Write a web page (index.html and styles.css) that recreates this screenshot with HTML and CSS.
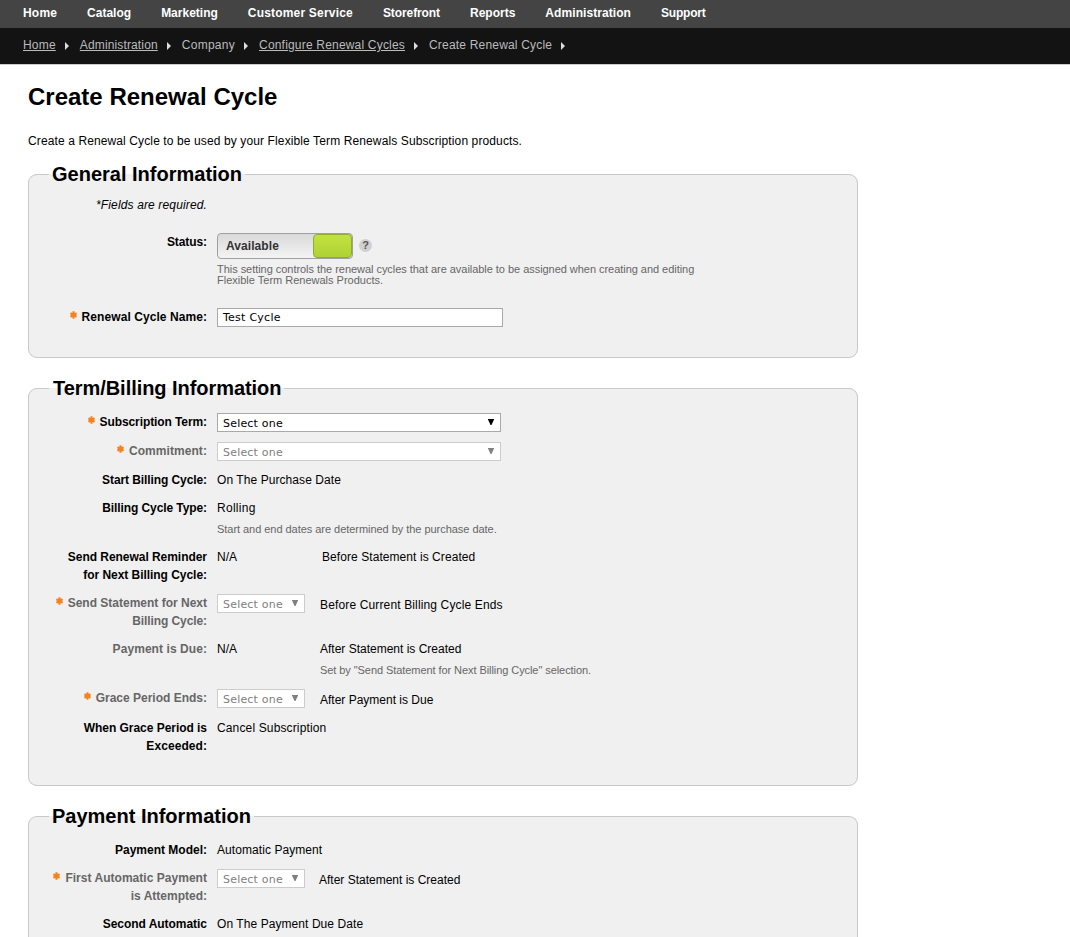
FILE: index.html
```
<!DOCTYPE html>
<html lang="en">
<head>
<meta charset="utf-8">
<title>Create Renewal Cycle</title>
<link rel="stylesheet" href="styles.css">
</head>
<body>
<svg width="0" height="0" class="defs"><defs>
<symbol id="req" viewBox="0 0 7 8"><path d="M3.5 0.3V7.7M0.4 2.2L6.6 5.8M6.6 2.2L0.4 5.8" stroke="#f58220" stroke-width="2.1" fill="none"/><circle cx="3.5" cy="4" r="2.3" fill="#f58220"/></symbol>
</defs></svg>
<nav class="nav">
<a class="w3">Home</a><a>Catalog</a><a>Marketing</a><a class="w3">Customer Service</a><a class="n1">Storefront</a><a>Reports</a><a class="w1">Administration</a><a class="n3">Support</a>
</nav>
<div class="crumbs">
<a class="link w3">Home</a><i></i><a class="link w2">Administration</a><i></i><a class="w4">Company</a><i></i><a class="link w3">Configure Renewal Cycles</a><i></i><a class="w3">Create Renewal Cycle</a><i></i>
</div>
<main class="page">
<h1>Create Renewal Cycle</h1>
<p class="intro">Create a Renewal Cycle to be used by your Flexible Term Renewals Subscription products.</p>

<fieldset class="panel general">
<legend>General Information</legend>
<div class="row required-note"><div class="label note w2">*Fields are required.</div></div>
<div class="row status"><div class="label"><b class="n1">Status:</b></div>
<div class="value"><div class="switch-line"><div class="switch"><span class="w1">Available</span><span class="knob"></span></div><span class="help">?</span></div>
<div class="hint tight"><span class="n0">This setting controls the renewal cycles that are available to be assigned when creating and editing</span><br>Flexible Term Renewals Products.</div></div></div>
<div class="row"><div class="label"><svg class="req"><use href="#req"/></svg><b class="w1">Renewal Cycle Name:</b></div><div class="field name">Test Cycle</div></div>
</fieldset>

<fieldset class="panel billing">
<legend><span class="term">Term/Billing Information</span></legend>
<div class="row"><div class="label"><svg class="req"><use href="#req"/></svg><b class="n1">Subscription Term:</b></div><div class="field select wide">Select one<span class="arrow"></span></div></div>
<div class="row"><div class="label off"><svg class="req"><use href="#req"/></svg><b class="w1">Commitment:</b></div><div class="field select wide disabled">Select one<span class="arrow"></span></div></div>
<div class="row"><div class="label"><b class="n1">Start Billing Cycle:</b></div><div class="value w1">On The Purchase Date</div></div>
<div class="row"><div class="label"><b class="n1">Billing Cycle Type:</b></div><div class="value"><span class="w4">Rolling</span><div class="hint n0">Start and end dates are determined by the purchase date.</div></div></div>
<div class="row"><div class="label"><b class="n0">Send Renewal Reminder</b><br><b class="n0">for Next Billing Cycle:</b></div><div class="value first">N/A</div><div class="after reminder w1">Before Statement is Created</div></div>
<div class="row"><div class="label off"><svg class="req"><use href="#req"/></svg><b>Send Statement for Next</b><br><b class="n1">Billing Cycle:</b></div><div class="field select disabled">Select one<span class="arrow"></span></div><div class="after drop w2">Before Current Billing Cycle Ends</div></div>
<div class="row"><div class="label off"><b class="w1">Payment is Due:</b></div><div class="value first">N/A</div><div class="after">After Statement is Created<div class="hint n2">Set by "Send Statement for Next Billing Cycle" selection.</div></div></div>
<div class="row grace"><div class="label off"><svg class="req"><use href="#req"/></svg><b>Grace Period Ends:</b></div><div class="field select disabled">Select one<span class="arrow"></span></div><div class="after drop">After Payment is Due</div></div>
<div class="row"><div class="label"><b class="n0">When Grace Period is</b><br><b class="w1">Exceeded:</b></div><div class="value w2">Cancel Subscription</div></div>
</fieldset>

<fieldset class="panel payment">
<legend>Payment Information</legend>
<div class="row"><div class="label"><b>Payment Model:</b></div><div class="value w1">Automatic Payment</div></div>
<div class="row"><div class="label off"><svg class="req"><use href="#req"/></svg><b class="w0">First Automatic Payment</b><br><b>is Attempted:</b></div><div class="field select disabled">Select one<span class="arrow"></span></div><div class="after drop attempt">After Statement is Created</div></div>
<div class="row"><div class="label"><b class="n0">Second Automatic</b></div><div class="value w1">On The Payment Due Date</div></div>
</fieldset>
</main>
</body>
</html>
```
FILE: styles.css
```
* { box-sizing: border-box; }
body { margin: 0; background: #fff; color: #000; font: 12px/18px "Liberation Sans", Arial, sans-serif; }
.defs { position: absolute; }
/* tracking steps */
.n0 { letter-spacing: -0.04px; }
.n1 { letter-spacing: -0.09px; }
.n2 { letter-spacing: -0.07px; }
.n3 { letter-spacing: -0.2px; }
.w0 { letter-spacing: 0.03px; }
.w1 { letter-spacing: 0.07px; }
.w2 { letter-spacing: 0.14px; }
.w3 { letter-spacing: 0.19px; }
.w4 { letter-spacing: 0.27px; }
.nav { display: flex; gap: 30px; height: 28px; padding: 4px 0 0 23px; background: #444; color: #fff; font-weight: bold; white-space: nowrap; }
.crumbs { display: flex; height: 37px; padding: 8px 0 0 23px; background: #131313; border-bottom: 1px solid #ccc; color: #bbb; white-space: nowrap; }
.crumbs .link { text-decoration: underline; }
.crumbs i { width: 0; height: 0; margin: 6px 11px 0 9px; border: solid transparent; border-width: 4px 0 4px 4px; border-left-color: #ddd; }
.page { width: 858px; padding-left: 28px; }
h1 { margin: 17px 0 0; font-size: 24px; line-height: 30px; }
.intro { margin: 20px 0 0; letter-spacing: 0.115px; }
.panel { margin: 12px 0 0; padding: 0; border: 1px solid #c9c9c9; border-radius: 9px; background: #f0f0f0; min-width: 0; }
legend { margin-left: 20px; padding: 0 3px; font-size: 20px; line-height: 24px; font-weight: bold; white-space: nowrap; }
.term { padding-left: 1px; letter-spacing: -0.05px; }
.general { height: 196px; }
.billing { height: 410px; margin-top: 18px; }
.payment { height: 133px; margin-top: 18px; border-bottom: 0; border-radius: 9px 9px 0 0; }
.row { display: flex; margin-bottom: 10px; white-space: nowrap; }
.panel > legend + .row { margin-top: 13px; }
.general > legend + .row { margin: 10px 0 19px; }
.panel > .row:last-child { margin-bottom: 0; }
.status { margin-bottom: 22px; }
.label { width: 178px; margin-right: 10px; text-align: right; flex: none; }
.note { font-style: italic; }
.off { color: #666; }
.req { width: 7px; height: 8px; margin-right: 5px; position: relative; top: -2px; }
.field { display: flex; width: 88px; height: 19px; padding: 0 5px; border: 1px solid #a9a9a9; background: #fff; font: 11px/17px "DejaVu Sans", Verdana, sans-serif; letter-spacing: 0.25px; flex: none; }
.name { width: 286px; }
.select { justify-content: space-between; padding-right: 6px; line-height: 19px; letter-spacing: 0.2px; }
.wide { width: 284px; }
.disabled { border-color: #ccc; color: #808080; }
.arrow { width: 6px; height: 6px; margin-top: 5px; background: currentColor; clip-path: polygon(0 0, 100% 0, 100% 10%, 58% 100%, 42% 100%, 0 10%); }
.first { width: 103px; }
.reminder { margin-left: 2px; }
.drop { margin: 2px 0 -2px 15px; }
.attempt { margin-left: 14px; }
.grace { margin-bottom: 11px; }
.hint { color: #666; font-size: 11px; line-height: 13px; margin: 6px 0 2px; }
.tight { line-height: 11px; margin: 5px 0 0; }
.switch-line { display: flex; gap: 6px; align-items: center; }
.switch { display: flex; justify-content: space-between; width: 136px; height: 26px; padding-left: 8px; border: 1px solid #a0a0a0; border-radius: 4px; background: linear-gradient(#d9d9d9, #f4f4f4); color: #333; font-weight: bold; line-height: 24px; }
.knob { width: 39px; height: 24px; border: 1px solid #91ad2e; border-radius: 4px; background: linear-gradient(#c3e23f, #b0d136); }
.help { width: 13px; height: 13px; margin-top: -2px; border-radius: 50%; background: #d0d0d0; color: #555; font-weight: bold; font-size: 11px; line-height: 13px; text-align: center; }
```
